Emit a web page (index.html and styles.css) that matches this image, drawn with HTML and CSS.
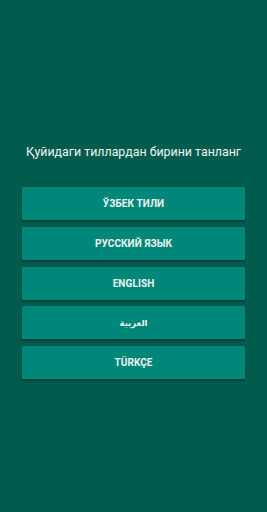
FILE: index.html
```html
<!DOCTYPE html>
<html lang="uz">
<head>
<meta charset="utf-8">
<link rel="stylesheet" href="styles.css">
</head>
<body>
<main class="screen">
  <h1 class="title">Қуйидаги тиллардан бирини танланг</h1>
  <div class="langs">
    <button class="lang">ЎЗБЕК ТИЛИ</button>
    <button class="lang">РУССКИЙ ЯЗЫК</button>
    <button class="lang">ENGLISH</button>
    <button class="lang arabic">العربية</button>
    <button class="lang">TÜRKÇE</button>
  </div>
</main>
</body>
</html>
```
FILE: styles.css
```css
html, body {
  margin: 0;
  padding: 0;
}
body {
  background: #025c4e;
  font-family: Roboto, "Noto Sans", "DejaVu Sans", sans-serif;
}
.screen {
  width: 267px;
  height: 512px;
  box-sizing: border-box;
  padding: 144px 22px 0;
  display: flex;
  flex-direction: column;
}
.title {
  margin: 0;
  font-size: 12.4px;
  font-weight: 400;
  line-height: 16px;
  color: #eef3f1;
  text-align: center;
  white-space: nowrap;
}
.langs {
  margin-top: 27px;
  display: flex;
  flex-direction: column;
  gap: 6.8px;
}
.lang {
  height: 33px;
  border: none;
  margin: 0;
  padding: 0;
  background: #00877a;
  color: #eef3f1;
  font-family: Roboto, "Noto Sans", sans-serif;
  font-weight: 700;
  font-size: 10px;
  letter-spacing: 0.1px;
  box-shadow: 0 1.5px 1.5px rgba(0, 0, 0, 0.3);
  border-radius: 1px;
}
.lang.arabic {
  font-family: "DejaVu Sans", "Noto Sans", sans-serif;
  font-weight: 700;
  font-size: 8.5px;
}
```
